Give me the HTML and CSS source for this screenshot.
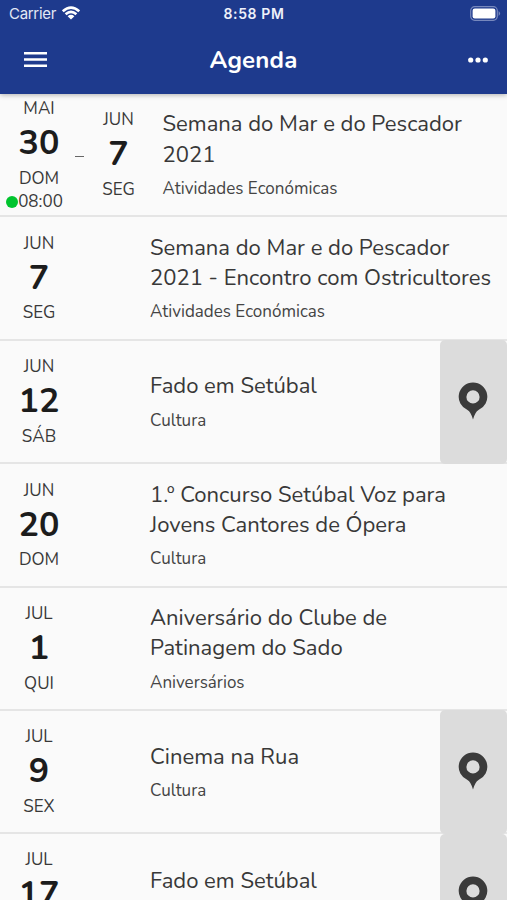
FILE: index.html
```html
<!DOCTYPE html>
<html lang="pt">
<head>
<meta charset="utf-8">
<meta name="viewport" content="width=device-width, initial-scale=1">
<title>Agenda</title>
<link rel="stylesheet" href="styles.css">
</head>
<body>
<header class="header">
  <div class="status">
    <div class="carrier"><span>Carrier</span>
      <svg class="wifi" width="18" height="14" viewBox="0 0 18 14" fill="none" stroke="#fff" stroke-width="2.6"><path d="M.8 5.3Q9-2 17.2 5.3M3.6 8.3Q9 3.3 14.4 8.3"/><path d="M5.6 10.2Q9 7.4 12.4 10.2L9 13.6Z" fill="#fff" stroke="none"/></svg>
    </div>
    <div class="clock">8:58 PM</div>
    <svg class="battery" width="31" height="15" viewBox="0 0 31 15"><rect x=".7" y=".7" width="26.6" height="13.6" rx="4" fill="none" stroke="#7788bd" stroke-width="1.2"/><rect x="2.6" y="2.6" width="22.8" height="9.8" rx="2.2" fill="#fff"/><path d="M28.6 5Q31.6 7.5 28.6 10Z" fill="#7788bd"/></svg>
  </div>
  <nav class="bar">
    <svg class="menu" width="23" height="16" viewBox="0 0 23 16" fill="#fff"><path d="M0 0h23v2.6H0zM0 6.2h23v2.6H0zM0 12.5h23v2.6H0z"/></svg>
    <h1 class="heading">Agenda</h1>
    <svg class="more" width="20" height="6" viewBox="0 0 20 6" fill="#fff"><circle cx="2.7" cy="3" r="2.6"/><circle cx="10" cy="3" r="2.6"/><circle cx="17.3" cy="3" r="2.6"/></svg>
  </nav>
</header>
<main class="list">
  <article class="row range">
    <div class="date"><span class="month">MAI</span><span class="day">30</span><span class="week">DOM</span><span class="time"><i class="dot"></i>08:00</span></div>
    <span class="dash"></span>
    <div class="date end"><span class="month">JUN</span><span class="day">7</span><span class="week">SEG</span></div>
    <div class="info"><h2 class="title">Semana do Mar e do Pescador<br>2021</h2><p class="category">Atividades Económicas</p></div>
  </article>
  <article class="row">
    <div class="date"><span class="month">JUN</span><span class="day">7</span><span class="week">SEG</span></div>
    <div class="info"><h2 class="title">Semana do Mar e do Pescador<br>2021 - Encontro com Ostricultores</h2><p class="category">Atividades Económicas</p></div>
  </article>
  <article class="row">
    <div class="date"><span class="month">JUN</span><span class="day">12</span><span class="week">SÁB</span></div>
    <div class="info"><h2 class="title">Fado em Setúbal</h2><p class="category">Cultura</p></div>
    <div class="place"><svg class="pin" width="30" height="38" viewBox="0 0 30 38"><path fill="#3b3b3b" fill-rule="evenodd" d="M15 .5A14.3 14.3 0 0 1 20.5 28Q17.2 29.8 15 37.5Q12.8 29.8 9.5 28A14.3 14.3 0 0 1 15 .5ZM15 8.3A6.6 6.6 0 1 0 15 21.5A6.6 6.6 0 1 0 15 8.3Z"/></svg></div>
  </article>
  <article class="row">
    <div class="date"><span class="month">JUN</span><span class="day">20</span><span class="week">DOM</span></div>
    <div class="info"><h2 class="title">1.º Concurso Setúbal Voz para<br>Jovens Cantores de Ópera</h2><p class="category">Cultura</p></div>
  </article>
  <article class="row">
    <div class="date"><span class="month">JUL</span><span class="day">1</span><span class="week">QUI</span></div>
    <div class="info"><h2 class="title">Aniversário do Clube de<br>Patinagem do Sado</h2><p class="category">Aniversários</p></div>
  </article>
  <article class="row">
    <div class="date"><span class="month">JUL</span><span class="day">9</span><span class="week">SEX</span></div>
    <div class="info"><h2 class="title">Cinema na Rua</h2><p class="category">Cultura</p></div>
    <div class="place"><svg class="pin" width="30" height="38" viewBox="0 0 30 38"><path fill="#3b3b3b" fill-rule="evenodd" d="M15 .5A14.3 14.3 0 0 1 20.5 28Q17.2 29.8 15 37.5Q12.8 29.8 9.5 28A14.3 14.3 0 0 1 15 .5ZM15 8.3A6.6 6.6 0 1 0 15 21.5A6.6 6.6 0 1 0 15 8.3Z"/></svg></div>
  </article>
  <article class="row">
    <div class="date"><span class="month">JUL</span><span class="day">17</span></div>
    <div class="info"><h2 class="title">Fado em Setúbal</h2></div>
    <div class="place"><svg class="pin" width="30" height="38" viewBox="0 0 30 38"><path fill="#3b3b3b" fill-rule="evenodd" d="M15 .5A14.3 14.3 0 0 1 20.5 28Q17.2 29.8 15 37.5Q12.8 29.8 9.5 28A14.3 14.3 0 0 1 15 .5ZM15 8.3A6.6 6.6 0 1 0 15 21.5A6.6 6.6 0 1 0 15 8.3Z"/></svg></div>
  </article>
</main>
</body>
</html>
```
FILE: styles.css
```css
* { box-sizing: border-box; }
body {
  margin: 0;
  height: 900px;
  overflow: hidden;
  display: flex;
  flex-direction: column;
  background: #fafafa;
  color: #383838;
  font-family: Nunito, Lato, sans-serif;
}
h1, h2, p { margin: 0; }
.header {
  position: relative;
  flex: none;
  height: 93.5px;
  background: #1e3a8d;
  color: #fff;
  box-shadow: 0 1px 5px rgba(0, 0, 0, .3);
}
.status {
  display: grid;
  grid-template-columns: 1fr auto 1fr;
  align-items: center;
  height: 27px;
  padding: 0 7px 0 9px;
  font: 15px Inter, sans-serif;
}
.carrier { display: flex; align-items: center; gap: 6px; color: #e3e8f5; letter-spacing: -.3px; }
.wifi { margin-top: -2px; }
.clock { margin-left: -1px; font-size: 14px; font-weight: 600; letter-spacing: .6px; color: #eef1fa; }
.battery { justify-self: end; margin-right: -1px; }
.bar {
  display: grid;
  grid-template-columns: 1fr auto 1fr;
  align-items: center;
  height: 66px;
  padding: 0 19px 0 24px;
}
.heading { margin-left: -5px; font-size: 24px; line-height: 30px; font-weight: 700; letter-spacing: .2px; }
.more { justify-self: end; }
.list { flex: none; margin-top: .5px; }
.row {
  display: flex;
  align-items: center;
  height: 123.4px;
  padding-top: 1px;
  border-bottom: 2px solid #e5e5e5;
}
.row:last-child { align-items: flex-start; padding-top: 14px; border: 0; }
.date {
  flex: none;
  display: flex;
  flex-direction: column;
  align-items: center;
  width: 78px;
  margin-right: 72px;
  font-size: 17px;
  line-height: 24px;
}
.day { font-size: 34px; line-height: 45.5px; font-weight: 700; color: #1c1c1c; }
.time { display: flex; align-items: center; margin-left: -9px; line-height: 22.5px; }
.dot { width: 12px; height: 12px; border-radius: 50%; background: #00c42e; }
.range .date { margin-right: 0; }
.dash { flex: none; width: 9px; height: 1px; margin: 3px -5px 0 -3px; background: #666; }
.range .end { width: 79px; margin-right: 4.5px; }
.info { flex: 1; white-space: nowrap; }
.row:last-child .info { padding-top: 18px; }
.title { font-size: 22.06px; line-height: 30.5px; font-weight: 400; }
.category { margin-top: 5.6px; font-size: 17px; line-height: 25px; color: #444; }
.place {
  flex: none;
  display: flex;
  align-items: center;
  justify-content: center;
  width: 67px;
  height: 123.4px;
  padding: 0 1px 2px 0;
  border-radius: 5px;
  background: #dcdcdc;
}
.row:last-child .place { margin-top: -14px; }
```
